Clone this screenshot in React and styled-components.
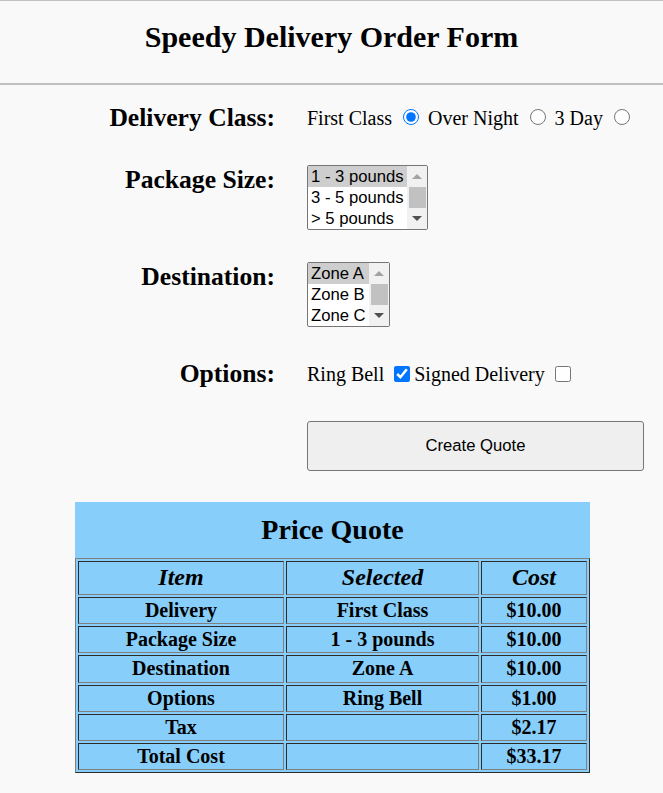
import styled, { createGlobalStyle } from "styled-components";

const GlobalStyle = createGlobalStyle`
  body {
    margin: 0;
    background: #f9f9f9;
    font-family: "Liberation Serif", "Times New Roman", serif;
    color: #000;
  }
`;

const Header = styled.header`
  border-top: 1px solid #c0c0c0;
  border-bottom: 2px solid #c0c0c0;
  padding: 19px 0 29px;
  text-align: center;
`;

const Title = styled.h1`
  margin: 0;
  font-size: 30px;
  font-weight: 700;
`;

const Form = styled.form`
  display: flex;
  flex-direction: column;
  gap: 32px;
  padding-top: 18px;
`;

const Row = styled.div`
  display: grid;
  grid-template-columns: 275px 1fr;
  column-gap: 32px;
  align-items: ${(props) => (props.$top ? "start" : "center")};
`;

const Label = styled.div`
  text-align: right;
  font-size: 25.6px;
  font-weight: 700;
`;

const Field = styled.div`
  font-size: 20px;
  white-space: nowrap;
`;

const Radio = styled.input.attrs({ type: "radio" })`
  width: 16px;
  height: 16px;
  margin: 3px 4px 0 6px;
`;

const Check = styled.input.attrs({ type: "checkbox" })`
  width: 16px;
  height: 16px;
  margin: 0 4px 0 5px;
  vertical-align: -1px;
`;

const ListBox = styled.div`
  display: flex;
  width: ${(props) => props.$width}px;
  box-sizing: border-box;
  border: 1px solid #767676;
  border-radius: 2px;
  background: #fff;
  overflow: hidden;
`;

const Options = styled.div`
  flex: 1;
  font-family: "Liberation Sans", Arial, sans-serif;
  font-size: 16.67px;
`;

const Option = styled.div`
  height: 21px;
  line-height: 21px;
  padding: 0 3px;
  background: ${(props) => (props.$selected ? "#cecece" : "transparent")};
`;

const ScrollBar = styled.div`
  width: 20px;
  display: flex;
  flex-direction: column;
  background: #f1f1f1;
`;

const ScrollButton = styled.div`
  height: 21px;
  display: flex;
  align-items: center;
  justify-content: center;

  &::before {
    content: "";
    border-left: 5px solid transparent;
    border-right: 5px solid transparent;
    ${(props) =>
      props.$down
        ? "border-top: 5px solid #505050;"
        : "border-bottom: 5px solid #a3a3a3;"}
  }
`;

const Thumb = styled.div`
  height: 21px;
  margin: 0 1px 0 2px;
  background: #c1c1c1;
`;

const Button = styled.button`
  width: 337px;
  height: 50px;
  border: 1px solid #767676;
  border-radius: 3px;
  background: #efefef;
  font-family: "Liberation Sans", Arial, sans-serif;
  font-size: 16.67px;
  color: #000;
`;

const Table = styled.table`
  width: 515px;
  margin: 31px 73px 0 75px;
  table-layout: fixed;
  border: 1px outset gray;
  border-spacing: 2px;
  background: #87cefa;
`;

const Caption = styled.caption`
  background: #87cefa;
  padding: 12px 0 12px;
  font-size: 28px;
  font-weight: 700;
`;

const HeadCell = styled.th`
  width: ${(props) => props.$width}px;
  box-sizing: border-box;
  border: 1px inset gray;
  padding: 2px 2px 3px;
  font-size: 24px;
  font-style: italic;
  font-weight: 700;
`;

const Cell = styled.td`
  border: 1px inset gray;
  padding: 1px 1px 1.2px;
  text-align: center;
  font-size: 20px;
  font-weight: 700;
`;

function SelectList({ width, items }) {
  return (
    <ListBox $width={width}>
      <Options>
        {items.map((item, i) => (
          <Option key={item} $selected={i === 0}>
            {item}
          </Option>
        ))}
      </Options>
      <ScrollBar>
        <ScrollButton />
        <Thumb />
        <ScrollButton $down />
      </ScrollBar>
    </ListBox>
  );
}

const quote = [
  ["Delivery", "First Class", "$10.00"],
  ["Package Size", "1 - 3 pounds", "$10.00"],
  ["Destination", "Zone A", "$10.00"],
  ["Options", "Ring Bell", "$1.00"],
  ["Tax", "", "$2.17"],
  ["Total Cost", "", "$33.17"],
];

export default function App() {
  return (
    <>
      <GlobalStyle />
      <Header>
        <Title>Speedy Delivery Order Form</Title>
      </Header>
      <Form onSubmit={(e) => e.preventDefault()}>
        <Row>
          <Label>Delivery Class:</Label>
          <Field>
            First Class <Radio name="cls" defaultChecked /> Over Night{" "}
            <Radio name="cls" /> 3 Day <Radio name="cls" />
          </Field>
        </Row>
        <Row $top>
          <Label>Package Size:</Label>
          <SelectList
            width={121}
            items={["1 - 3 pounds", "3 - 5 pounds", "> 5 pounds"]}
          />
        </Row>
        <Row $top>
          <Label>Destination:</Label>
          <SelectList width={83} items={["Zone A", "Zone B", "Zone C"]} />
        </Row>
        <Row>
          <Label>Options:</Label>
          <Field>
            Ring Bell <Check defaultChecked />
            Signed Delivery <Check />
          </Field>
        </Row>
        <Row>
          <span />
          <div>
            <Button type="submit">Create Quote</Button>
          </div>
        </Row>
      </Form>
      <Table>
        <Caption>Price Quote</Caption>
        <thead>
          <tr>
            <HeadCell $width={206}>Item</HeadCell>
            <HeadCell $width={193}>Selected</HeadCell>
            <HeadCell $width={106}>Cost</HeadCell>
          </tr>
        </thead>
        <tbody>
          {quote.map(([item, selected, cost]) => (
            <tr key={item}>
              <Cell>{item}</Cell>
              <Cell>{selected}</Cell>
              <Cell>{cost}</Cell>
            </tr>
          ))}
        </tbody>
      </Table>
    </>
  );
}
